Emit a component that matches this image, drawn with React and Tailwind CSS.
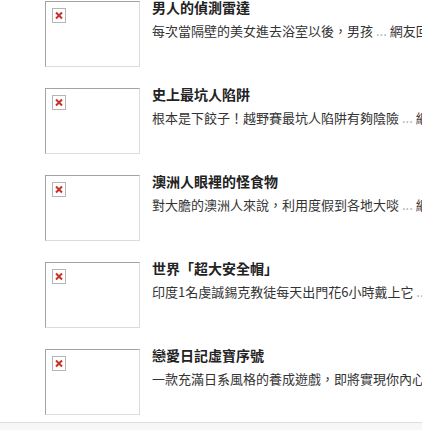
const items = [
  {
    title: '男人的偵測雷達',
    desc: '每次當隔壁的美女進去浴室以後，男孩',
    tail: '網友回應',
  },
  {
    title: '史上最坑人陷阱',
    desc: '根本是下餃子！越野賽最坑人陷阱有夠陰險',
    tail: '網友回應',
  },
  {
    title: '澳洲人眼裡的怪食物',
    desc: '對大膽的澳洲人來說，利用度假到各地大啖',
    tail: '網友回應',
  },
  {
    title: '世界「超大安全帽」',
    desc: '印度1名虔誠錫克教徒每天出門花6小時戴上它',
    tail: '網友回應',
  },
  {
    title: '戀愛日記虛寶序號',
    desc: '一款充滿日系風格的養成遊戲，即將實現你內心的戀愛夢想',
    tail: '',
  },
];

function BrokenImage() {
  return (
    <svg width="14" height="15" viewBox="0 0 14 15" className="block">
      <rect x="0.5" y="0.5" width="13" height="14" fill="#fff" stroke="#b5b5b5" />
      <path d="M4 4.5 L10 10.5 M10 4.5 L4 10.5" stroke="#c8302a" strokeWidth="2" />
    </svg>
  );
}

function Row({ item }) {
  return (
    <div className="flex items-start h-[66px]">
      <div className="w-[95px] h-[66px] shrink-0 bg-white border border-t-[#a3a3a3] border-l-[#a3a3a3] border-r-[#dcdcdc] border-b-[#dcdcdc] p-[6px]">
        <BrokenImage />
      </div>
      <div className="ml-3 -mt-px min-w-0 flex-1">
        <div className="text-[14px] leading-[14px] font-bold text-[#222] whitespace-nowrap">
          {item.title}
        </div>
        <div className="mt-2 text-[13px] leading-[18px] text-[#333] whitespace-nowrap overflow-hidden">
          {item.desc}
          <span className="text-[#aaa]"> ... </span>
          {item.tail}
        </div>
      </div>
    </div>
  );
}

export default function App() {
  return (
    <div
      className="w-[422px] h-[430px] bg-white overflow-hidden flex flex-col"
      style={{ fontFamily: '"Noto Sans CJK TC", "Liberation Sans", sans-serif' }}
    >
      <div className="flex flex-col gap-[21px] pt-px pb-[7px] pl-[45px]">
        {items.map((item) => (
          <Row key={item.title} item={item} />
        ))}
      </div>
      <div className="flex-1 border-t border-[#dddddd] bg-[#f7f7f7]" />
    </div>
  );
}
